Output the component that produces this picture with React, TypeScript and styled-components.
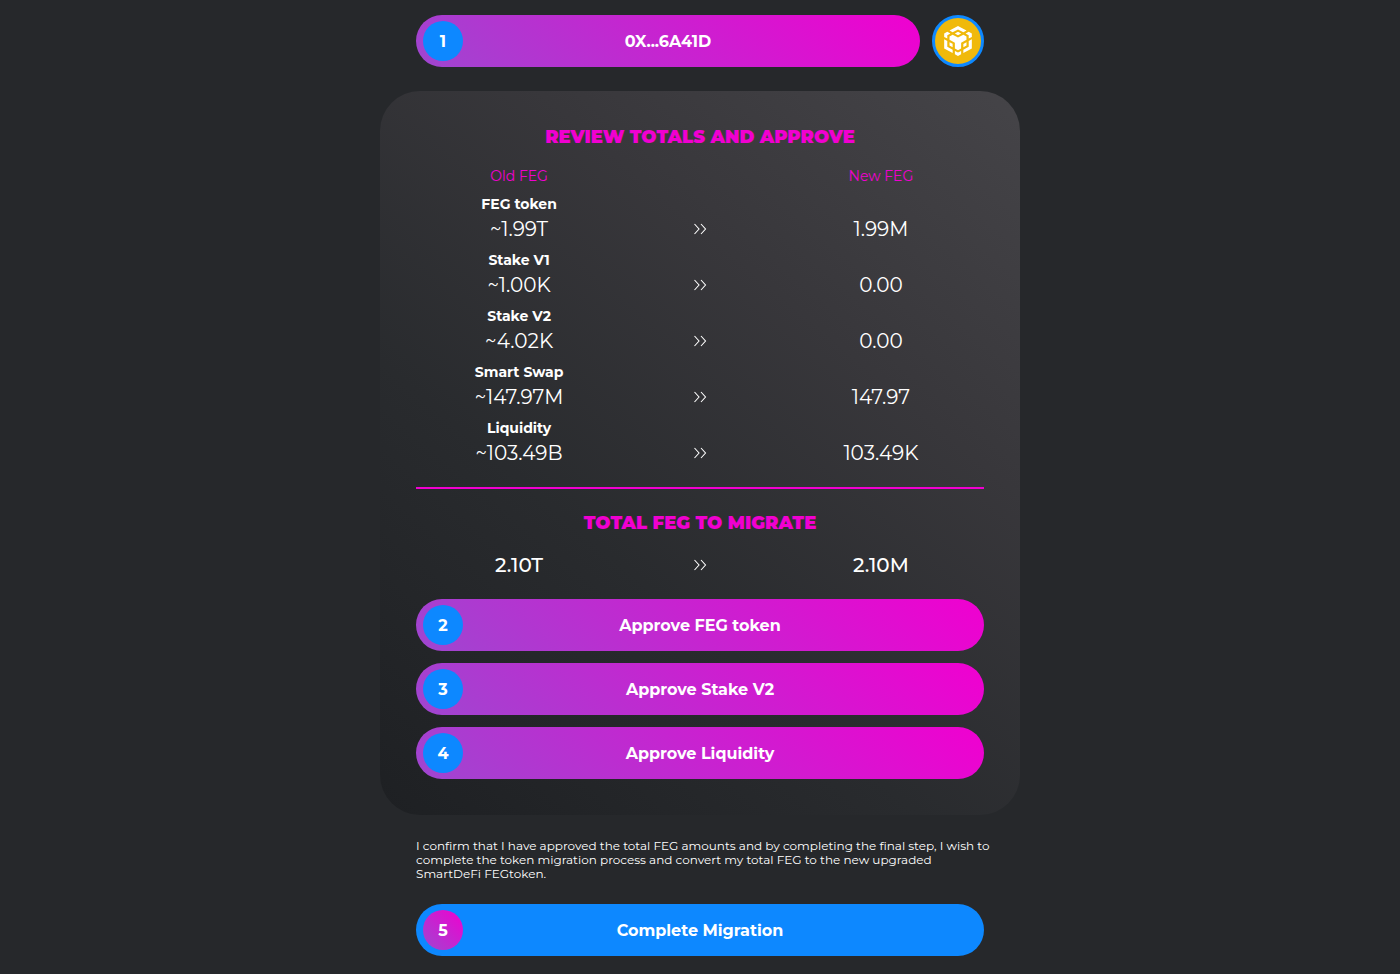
import React from "react";
import styled, { createGlobalStyle } from "styled-components";

const colors = {
  page: "#26282b",
  pink: "#f000d0",
  violet: "#9f46d0",
  blue: "#0d88ff",
  gold: "#f0b90b",
};

const pinkGradient = `linear-gradient(45deg, ${colors.violet} 0%, ${colors.pink} 100%)`;

const GlobalStyle = createGlobalStyle`
  * { box-sizing: border-box; }
  body {
    margin: 0;
    background: ${colors.page};
    color: #fff;
    font-family: Gotham, Montserrat, Inter, "Liberation Sans", sans-serif;
  }
`;

const Page = styled.main`
  width: 100%;
  max-width: 640px;
  margin: 0 auto;
  padding: 15px 0 18px;
`;

const TopBar = styled.header`
  display: flex;
  gap: 12px;
  padding: 0 36px;
  margin-bottom: 24px;
`;

const NetworkButton = styled.button`
  display: flex;
  flex: none;
  align-items: center;
  justify-content: center;
  width: 52px;
  height: 52px;
  padding: 0;
  border: 3px solid ${colors.blue};
  border-radius: 50%;
  background: ${colors.gold};
  color: #fff;
  cursor: pointer;
`;

const StepButton = styled.button<{ $final?: boolean }>`
  display: grid;
  grid-template-columns: 40px 1fr 40px;
  align-items: center;
  width: 100%;
  height: 52px;
  padding: 0 7px;
  border: 0;
  border-radius: 26px;
  background: ${(p) => (p.$final ? colors.blue : pinkGradient)};
  color: #fff;
  font: inherit;
  font-size: 16px;
  font-weight: 700;
  cursor: pointer;
`;

const StepNumber = styled.span<{ $final?: boolean }>`
  display: flex;
  align-items: center;
  justify-content: center;
  height: 40px;
  border-radius: 50%;
  background: ${(p) => (p.$final ? pinkGradient : colors.blue)};
`;

const Card = styled.section`
  padding: 36px;
  border-radius: 40px;
  background: linear-gradient(40deg, #1e2023 0%, #292b2e 36%, #38373b 68%, #454448 100%);
`;

const Heading = styled.h2<{ $compact?: boolean }>`
  margin: 0 0 ${(p) => (p.$compact ? 16 : 18)}px;
  color: ${colors.pink};
  font-size: 18px;
  font-weight: 900;
  line-height: 21px;
  text-align: center;
`;

const Totals = styled.table`
  width: 100%;
  table-layout: fixed;
  border-collapse: collapse;
  text-align: center;
`;

const ColumnTitle = styled.th`
  height: 28px;
  padding: 0;
  color: ${colors.pink};
  font-size: 14px;
  font-weight: 400;
  line-height: 20px;
  vertical-align: top;
`;

const SourceName = styled.th`
  height: 20px;
  padding: 0;
  font-size: 14px;
  font-weight: 700;
  line-height: 20px;
`;

const Amount = styled.td<{ $strong?: boolean }>`
  height: 36px;
  padding: 0;
  font-size: 20px;
  font-weight: ${(p) => (p.$strong ? 500 : 400)};
  line-height: 30px;
  vertical-align: top;
`;

const ArrowIcon = styled.svg`
  display: block;
  margin: 9px auto 0;
`;

const Divider = styled.hr`
  height: 2px;
  margin: 13px 0 24px;
  border: 0;
  background: ${colors.pink};
`;

const Steps = styled.div`
  display: flex;
  flex-direction: column;
  gap: 12px;
  margin-top: 13px;
`;

const ConfirmText = styled.p`
  margin: 24px 0 23px;
  padding: 0 28px 0 36px;
  font-size: 12px;
  line-height: 14px;
`;

const Confirm = styled.footer`
  padding: 0 36px;
`;

const sources = [
  { name: "FEG token", before: "~1.99T", after: "1.99M" },
  { name: "Stake V1", before: "~1.00K", after: "0.00" },
  { name: "Stake V2", before: "~4.02K", after: "0.00" },
  { name: "Smart Swap", before: "~147.97M", after: "147.97" },
  { name: "Liquidity", before: "~103.49B", after: "103.49K" },
];

const approvals = ["Approve FEG token", "Approve Stake V2", "Approve Liquidity"];

const Arrow = () => (
  <ArrowIcon width="14" height="12" viewBox="0 0 14 12" fill="none" stroke="#fff" aria-hidden="true">
    <path d="M1.5 1 6 6 1.5 11M8 1l4.500 5L8 11" strokeWidth="1.1" />
  </ArrowIcon>
);

const Columns = () => (
  <colgroup>
    <col width="36.3%" />
    <col width="27.4%" />
    <col width="36.3%" />
  </colgroup>
);

const BnbLogo = () => (
  <svg width="32" height="30" viewBox="0 0 24 24" preserveAspectRatio="none" fill="currentColor" aria-hidden="true">
    <path d="M5.631 3.676 12.001 0l6.367 3.676-2.34 1.358L12 2.716 7.972 5.034 5.631 3.676Zm12.737 4.636-2.34-1.358L12 9.272 7.972 6.954l-2.34 1.358v2.716l4.026 2.318v4.636L12 19.341l2.341-1.358v-4.636l4.027-2.318V8.312Zm0 7.352v-2.717l-2.34 1.358v2.716l2.34-1.357Zm1.663.96-4.027 2.318v2.717l6.368-3.677V10.63l-2.34 1.358v4.636Zm-2.34-10.63 2.34 1.358v2.716l2.341-1.358V5.994l-2.34-1.358-2.342 1.358ZM9.657 19.926v2.716L12 24l2.341-1.358v-2.716L12 21.284l-2.342-1.358Zm-4.027-4.28 2.341 1.358v-2.717l-2.34-1.358v2.717Zm4.027-9.652L12 7.352l2.341-1.358L12 4.636 9.658 5.994Zm-5.69 1.358 2.341-1.358-2.341-1.358-2.34 1.358v2.716l2.34 1.358V7.352Zm0 4.636-2.34-1.358v7.353l6.366 3.676v-2.717l-4.026-2.318v-4.636Z" />
  </svg>
);

export default function App() {
  return (
    <>
      <GlobalStyle />
      <Page>
        <TopBar>
          <StepButton>
            <StepNumber>1</StepNumber>
            <span>0X...6A41D</span>
          </StepButton>
          <NetworkButton aria-label="BNB Chain">
            <BnbLogo />
          </NetworkButton>
        </TopBar>

        <Card>
          <Heading>REVIEW TOTALS AND APPROVE</Heading>
          <Totals>
            <Columns />
            <thead>
              <tr>
                <ColumnTitle scope="col">Old FEG</ColumnTitle>
                <td />
                <ColumnTitle scope="col">New FEG</ColumnTitle>
              </tr>
            </thead>
            {sources.map((s) => (
              <tbody key={s.name}>
                <tr>
                  <SourceName scope="rowgroup">{s.name}</SourceName>
                </tr>
                <tr>
                  <Amount>{s.before}</Amount>
                  <Amount><Arrow /></Amount>
                  <Amount>{s.after}</Amount>
                </tr>
              </tbody>
            ))}
          </Totals>
          <Divider />
          <Heading $compact>TOTAL FEG TO MIGRATE</Heading>
          <Totals>
            <Columns />
            <tbody>
              <tr>
                <Amount $strong>2.10T</Amount>
                <Amount><Arrow /></Amount>
                <Amount $strong>2.10M</Amount>
              </tr>
            </tbody>
          </Totals>
          <Steps>
            {approvals.map((label, i) => (
              <StepButton key={label}>
                <StepNumber>{i + 2}</StepNumber>
                <span>{label}</span>
              </StepButton>
            ))}
          </Steps>
        </Card>

        <ConfirmText>
          I confirm that I have approved the total FEG amounts and by completing the final step, I wish to
          complete the token migration process and convert my total FEG to the new upgraded
          <br />
          SmartDeFi FEGtoken.
        </ConfirmText>
        <Confirm>
          <StepButton $final>
            <StepNumber $final>5</StepNumber>
            <span>Complete Migration</span>
          </StepButton>
        </Confirm>
      </Page>
    </>
  );
}
